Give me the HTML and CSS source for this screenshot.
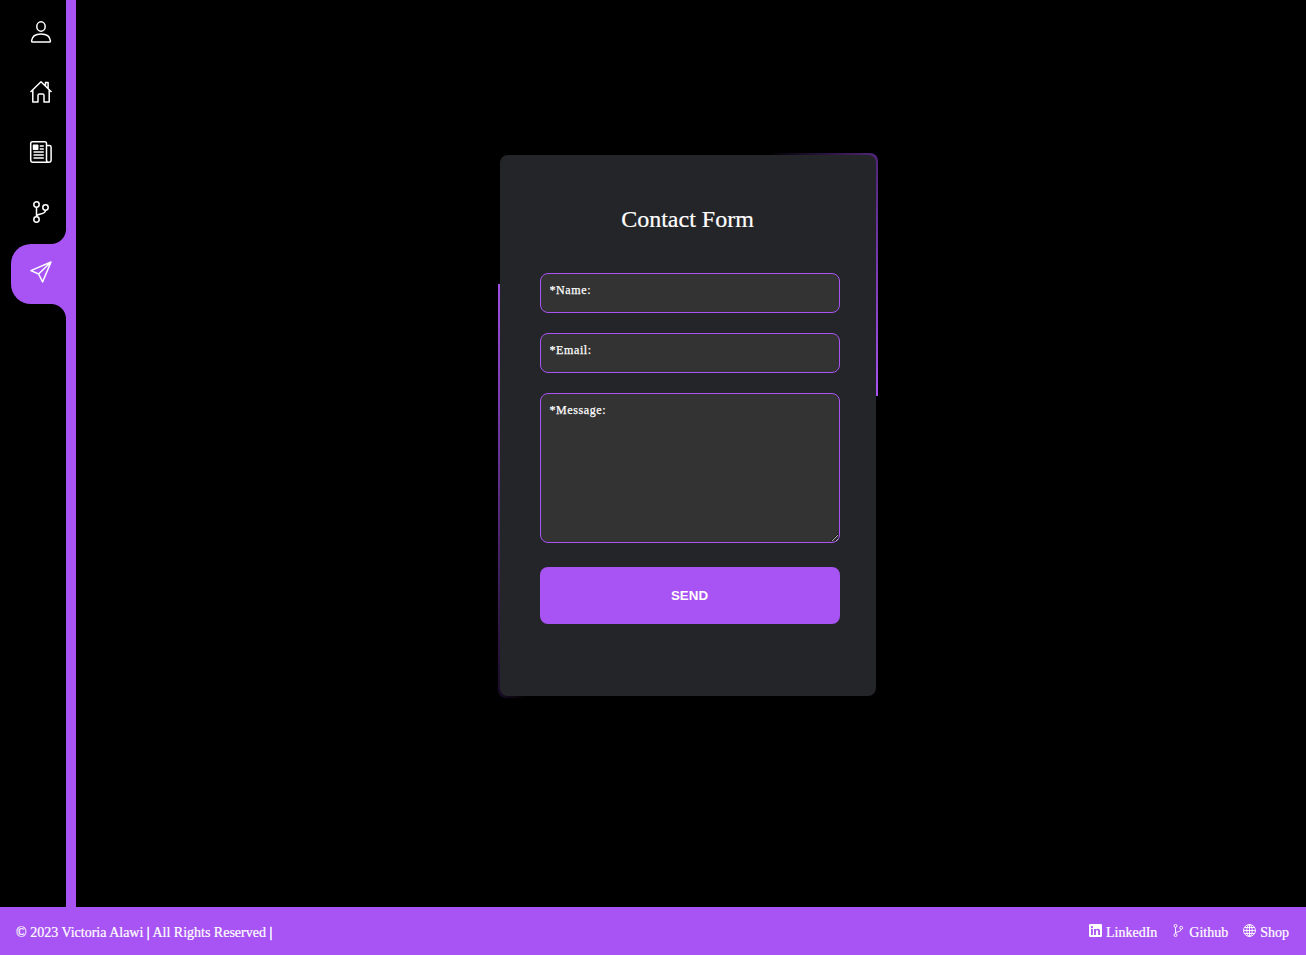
FILE: index.html
```html
<!DOCTYPE html>
<html lang="en">
<head>
<meta charset="utf-8">
<title>Contact</title>
<link rel="stylesheet" href="styles.css">
</head>
<body>
<div class="layout">
  <nav class="sidebar">
    <a class="nav-item" aria-label="About"><svg class="icon" viewBox="0 0 24 24"><ellipse cx="12" cy="6.500" rx="4.200" ry="4.700"/><path d="M3.700 22q-1.200 0-1.100-1.300C3.100 16.500 6.700 14 12 14s8.900 2.500 9.400 6.700q.1 1.300-1.100 1.300z"/></svg></a>
    <a class="nav-item" aria-label="Home"><svg class="icon" viewBox="0 0 24 24"><path d="M1.500 12 12 1.800 22.500 12M3.800 10v12H9v-6.500q0-1.500 1.500-1.500h3q1.500 0 1.500 1.500V22h5.200V10M16.500 5.500V2.500h2.600v5.700"/></svg></a>
    <a class="nav-item" aria-label="Blog"><svg class="icon" viewBox="0 0 24 24"><path d="M19.500 22.200H4q-2.300 0-2.300-2.300V3.500q0-1.800 1.800-1.800h12.200q1.800 0 1.800 1.800v16.400q0 2.300 2.300 2.300t2.300-2.300V7.300q0-1.700-1.700-1.700h-2.600"/><path d="M10.800 6h4M10.800 9h4M4.500 12h10.300M4.500 15h10.300M4.500 18h10.300"/><path class="solid" d="M4.500 5.300h4.200v4H4.500z"/></svg></a>
    <a class="nav-item" aria-label="Projects"><svg class="icon" viewBox="0 0 24 24"><circle cx="7.500" cy="4.500" r="2.700"/><circle cx="7.500" cy="19.500" r="2.700"/><circle cx="16.500" cy="7.500" r="2.700"/><path d="M7.500 7.200v9.600M16.500 10.200c0 5.300-9 2.500-9 6.600"/></svg></a>
    <a class="nav-item active" aria-label="Contact"><svg class="icon" viewBox="0 0 24 24"><path d="M22 2 1.900 10.600 9.600 14 13.600 21.900zM22 2 9.600 14"/></svg></a>
  </nav>
  <main class="content">
    <section class="card">
      <form class="form">
        <h1 class="title">Contact Form</h1>
        <input class="field" placeholder="*Name:" aria-label="Name">
        <input class="field" placeholder="*Email:" aria-label="Email">
        <textarea class="field message" placeholder="*Message:" aria-label="Message"></textarea>
        <button class="send" type="button">SEND</button>
      </form>
    </section>
  </main>
</div>
<footer class="footer">
  <span class="copyright">© 2023 Victoria Alawi <span class="bar">|</span> All Rights Reserved <span class="bar">|</span></span>
  <div class="links">
    <a class="link"><svg class="mini" viewBox="0 0 24 24"><path class="solid flat" fill-rule="evenodd" d="M2 0h20q2 0 2 2v20q0 2-2 2H2q-2 0-2-2V2q0-2 2-2zm1.700 9.200v11h3.400v-11zM5.400 3.800a2 2 0 1 0 .01 0zM9.300 9.200v11h3.400v-6c0-3.400 4.200-3.400 4.200 0v6h3.400v-7c0-5-5.500-5.400-7.600-2.500V9.200z"/></svg>LinkedIn</a>
    <a class="link"><svg class="mini" viewBox="0 0 24 24"><circle cx="6.500" cy="3.500" r="2.700"/><circle cx="6.500" cy="20.500" r="2.700"/><circle cx="17" cy="7" r="2.700"/><path d="M6.500 6.200v11.600M17 9.700c0 6-10.500 3-10.500 8.100"/></svg>Github</a>
    <a class="link"><svg class="mini" viewBox="0 0 24 24"><circle cx="12" cy="12" r="11"/><ellipse cx="12" cy="12" rx="5" ry="11"/><path d="M12 1v22M1 12h22M3 6.500h18M3 17.500h18"/></svg>Shop</a>
  </div>
</footer>
</body>
</html>
```
FILE: styles.css
```css
:root { --purple: #a853f3; }
* { box-sizing: border-box; }
body {
  margin: 0;
  height: 955px;
  display: flex;
  flex-direction: column;
  overflow: hidden;
  background: #000;
  color: #fff;
  font-family: "Liberation Serif", "Times New Roman", serif;
}
.layout { flex: 1; display: flex; }
.sidebar {
  width: 76px;
  padding: 4px 0 0 11px;
  border-right: 10px solid var(--purple);
}
.nav-item {
  position: relative;
  display: flex;
  align-items: center;
  height: 60px;
  padding: 0 0 4px 18px;
}
.active { background: var(--purple); border-radius: 20px 0 0 20px; }
.active::before, .active::after {
  content: "";
  position: absolute;
  right: 0;
  width: 15px;
  height: 15px;
}
.active::before {
  top: -15px;
  background: radial-gradient(circle at 0 0, transparent 14.5px, var(--purple) 15.5px);
}
.active::after {
  bottom: -15px;
  background: radial-gradient(circle at 0 100%, transparent 14.5px, var(--purple) 15.5px);
}
.icon, .mini { fill: none; stroke: #fff; stroke-linejoin: round; }
.icon { width: 24px; height: 24px; stroke-width: 1.5; }
.solid { fill: #fff; }
.flat { stroke: none; }
.content { flex: 1; padding: 153px 0 0 422px; }
.card {
  width: 380px;
  height: 545px;
  padding: 2px;
  border-radius: 8px;
  background:
    linear-gradient(90deg, transparent, #51267a) 100% 0 / 110px 8px no-repeat,
    linear-gradient(#51267a, var(--purple)) 100% 8px / 8px 235px no-repeat,
    linear-gradient(#a04fe6, #1b0d28) 0 131px / 8px 406px no-repeat,
    linear-gradient(90deg, #1b0d28, transparent) 0 100% / 28px 8px no-repeat;
}
.form {
  height: 100%;
  display: flex;
  flex-direction: column;
  padding: 50px 36px 0 40px;
  border-radius: 8px;
  background: #242529;
}
.title {
  margin: 0 0 40px;
  width: 295px;
  text-align: center;
  font-size: 24px;
  font-weight: 400;
  line-height: 28px;
  -webkit-text-stroke: .2px #fff;
}
.field {
  width: 300px;
  height: 40px;
  margin: 0 0 20px;
  padding: 9px 8.5px 14px;
  border: 1px solid var(--purple);
  border-radius: 8px;
  outline: 0;
  background: #333;
  color: #fff;
  font: 500 12px/14px "Liberation Serif", "Times New Roman", serif;
  letter-spacing: .6px;
}
.field::placeholder { color: #fff; opacity: 1; -webkit-text-stroke: .25px #fff; }
.message { height: 150px; margin-bottom: 24px; resize: both; }
.send {
  width: 300px;
  height: 57px;
  padding: 0 1px 0 0;
  border: 0;
  border-radius: 8px;
  background: var(--purple);
  color: #fff;
  font: bold 13.333px "Liberation Sans", Arial, sans-serif;
}
.footer {
  height: 48px;
  padding: 3px 17px 0 16px;
  display: flex;
  align-items: center;
  justify-content: space-between;
  background: var(--purple);
  font-size: 14px;
  -webkit-text-stroke: .2px #fff;
}
.bar { display: inline-block; transform: translateY(-.5px); -webkit-text-stroke-width: .5px; }
.links { display: flex; gap: 15px; }
.link { display: flex; align-items: center; gap: 4px; }
.mini { width: 13px; height: 13px; margin-top: -5px; stroke-width: 1.7; }
```
